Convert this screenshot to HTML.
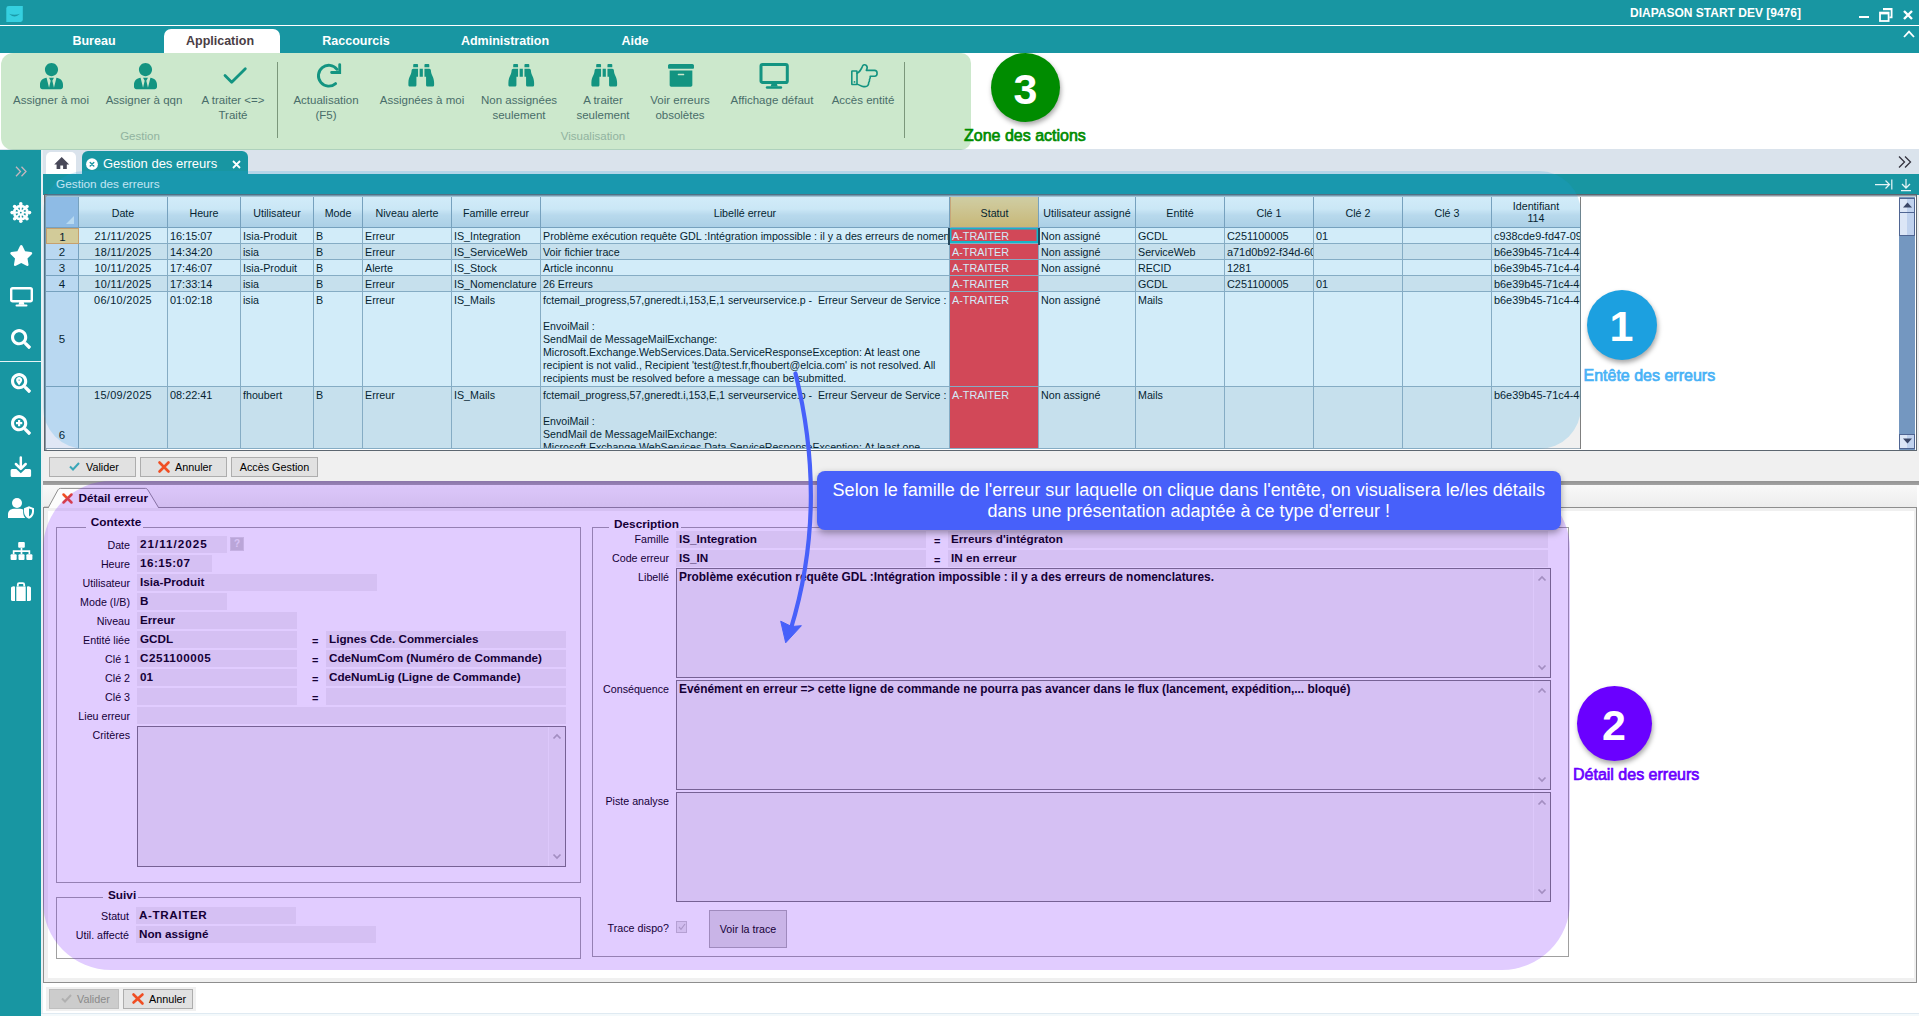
<!DOCTYPE html>
<html lang="fr">
<head>
<meta charset="utf-8">
<title>DIAPASON START DEV [9476]</title>
<style>
*{box-sizing:border-box}
html,body{margin:0;padding:0}
body{width:1919px;height:1016px;position:relative;overflow:hidden;background:#fff;font-family:"Liberation Sans",sans-serif;font-size:10.7px;color:#000}
.a{position:absolute}
.nw{white-space:nowrap}
svg{display:block;overflow:visible}
#titlebar{left:0;top:0;width:1919px;height:25px;background:#1896a2}
#titleline{left:0;top:25px;width:1919px;height:1.300px;background:#fff}
#menubar{left:0;top:26px;width:1919px;height:27px;background:#1896a2}
#ribbon{left:0;top:53px;width:1919px;height:97px;background:#fff}
#tabstrip{left:0;top:149px;width:1919px;height:25px;background:#dae3ec}
#sidebar{left:0;top:150px;width:41px;height:866px;background:#1896a2}
#sideline{left:41px;top:150px;width:2px;height:866px;background:#e9f1f4}
.menu{position:absolute;top:28px;height:26px;line-height:27px;color:#fff;font-weight:bold;font-size:12.5px;white-space:nowrap;text-align:center;width:120px}
.rib{position:absolute;top:93px;width:120px;text-align:center;font-size:11.5px;line-height:15px;color:#5c6685;white-space:nowrap}
.grp{position:absolute;top:129px;font-size:11.5px;line-height:15px;color:#b6bdc9;white-space:nowrap;text-align:center;width:120px}
.ic{position:absolute;fill:#1896a2}
.sic{position:absolute;fill:#fff}
/* grid */
.gh{position:absolute;top:197px;height:31px;background:linear-gradient(#ffffff,#f6f9fc 40%,#dfe8f0 60%,#cfdce8);border-right:1px solid #8da2b6;border-bottom:1px solid #8da2b6;text-align:center;line-height:31px;padding-top:1px;white-space:nowrap;overflow:hidden;font-size:10.7px}
.gc{position:absolute;white-space:nowrap;overflow:hidden;border-right:1px solid #9fb0bd;border-bottom:1px solid #9fb0bd;padding-left:2px;padding-top:1px;line-height:15px;font-size:10.7px}
.rh{position:absolute;left:46px;width:33px;background:#e6f0fa;border-right:1px solid #8da2b6;border-bottom:1px solid #8da2b6;text-align:center;font-size:11.5px}
.num{font-size:10.9px}
/* win buttons */
.btn{position:absolute;height:20px;background:#e1e1e1;border:1px solid #adadad;font-size:10.8px;line-height:18px;white-space:nowrap}
/* detail */
.lbl{position:absolute;text-align:right;white-space:nowrap;font-size:10.7px;line-height:18.5px;height:17px}
.fld{position:absolute;height:17px;background:#f0f0f0;font-weight:bold;font-size:11.7px;line-height:16.5px;padding-left:3px;white-space:nowrap;overflow:hidden}
.eq{position:absolute;font-weight:bold;font-size:11px;line-height:20.5px;height:17px}
.ta{position:absolute;background:#f0f0f0;border:1px solid #7a7a7a;font-weight:bold;font-size:11.9px;line-height:15px;padding:1px 0 0 2px;white-space:nowrap;overflow:hidden}
.tsb{position:absolute;top:0;right:0;width:17px;height:100%;background:#f0f0f0;border-left:1px solid #fafafa}
.gb{position:absolute;border:1px solid #a0a0a0;box-shadow:1px 1px 0 #fff, inset 1px 1px 0 #fff}
.gbl{position:absolute;font-weight:bold;font-size:11.8px;line-height:14px;background:#fff;padding:0 2px 0 5px;white-space:nowrap}
</style>
</head>
<body>
<div id="titlebar" class="a"></div>
<div id="titleline" class="a"></div>
<div id="menubar" class="a"></div>
<div id="ribbon" class="a"></div>
<div id="tabstrip" class="a"></div>
<div id="sidebar" class="a"></div>
<div id="sideline" class="a"></div>
<!-- ===== title bar ===== -->
<svg class="a" style="left:6px;top:6px" width="17" height="16" viewBox="6 6 17 16"><path d="M8.800 6H22.800V19.800Q22.800 21.900 20.600 21.900H6.300V8.400Q6.300 6 8.800 6Z" fill="#35d0e0"/><path d="M9 13.800Q14.500 15.800 20 13.800Q14.500 19.200 9 13.800Z" fill="#1a9aa8"/></svg>
<div class="a nw" style="left:1630px;top:5px;width:171px;height:17px;line-height:17px;color:#fff;font-weight:bold;font-size:12px;text-align:left">DIAPASON START DEV [9476]</div>
<div class="a" style="left:1859px;top:16px;width:10px;height:2px;background:#fff"></div>
<svg class="a" style="left:1879px;top:8px" width="14" height="14" viewBox="0 0 14 14"><path d="M4 0.8h8.6v8.6h-2.2" fill="none" stroke="#fff" stroke-width="1.8"/><rect x="1" y="4.6" width="8.6" height="8.4" fill="none" stroke="#fff" stroke-width="1.8"/><rect x="1" y="4.2" width="8.6" height="2.2" fill="#fff"/><rect x="4" y="0.2" width="8.6" height="2" fill="#fff"/></svg>
<svg class="a" style="left:1903px;top:10px" width="10" height="10" viewBox="0 0 10 10"><path d="M1 1L9 9M9 1L1 9" stroke="#fff" stroke-width="2.4" stroke-linecap="butt"/></svg>
<svg class="a" style="left:1903px;top:30px" width="12" height="8" viewBox="0 0 12 8"><path d="M1 7L6 1.6L11 7" fill="none" stroke="#fff" stroke-width="1.8"/></svg>
<!-- ===== menu ===== -->
<div class="a" style="left:164px;top:29px;width:116px;height:24px;background:#fff;border-radius:7px 7px 0 0"></div>
<div class="menu" style="left:34px">Bureau</div>
<div class="menu" style="left:160px;color:#4a3d45">Application</div>
<div class="menu" style="left:296px">Raccourcis</div>
<div class="menu" style="left:445px">Administration</div>
<div class="menu" style="left:575px">Aide</div>
<!-- ===== ribbon ===== -->
<div class="rib" style="left:-9px">Assigner à moi</div>
<div class="rib" style="left:84px">Assigner à qqn</div>
<div class="rib" style="left:173px">A traiter &lt;=&gt;<br>Traité</div>
<div class="rib" style="left:266px">Actualisation<br>(F5)</div>
<div class="rib" style="left:362px">Assignées à moi</div>
<div class="rib" style="left:459px">Non assignées<br>seulement</div>
<div class="rib" style="left:543px">A traiter<br>seulement</div>
<div class="rib" style="left:620px">Voir erreurs<br>obsolètes</div>
<div class="rib" style="left:712px">Affichage défaut</div>
<div class="rib" style="left:803px">Accès entité</div>
<div class="grp" style="left:80px">Gestion</div>
<div class="grp" style="left:533px">Visualisation</div>
<div class="a" style="left:277px;top:62px;width:1px;height:76px;background:#9a9a9a"></div>
<div class="a" style="left:904px;top:62px;width:1px;height:76px;background:#9a9a9a"></div>
<!-- ribbon icons -->
<svg class="ic" style="left:39.5px;top:62.5px" width="23" height="26.3" viewBox="0 0 448 512"><path d="M224 256c70.700 0 128-57.300 128-128S294.700 0 224 0 96 57.300 96 128s57.300 128 128 128zm95.800 32.600L272 480l-32-136 32-56h-96l32 56-32 136-47.800-191.400C56.900 292 0 350.300 0 422.400V464c0 26.500 21.500 48 48 48h352c26.500 0 48-21.500 48-48v-41.600c0-72.100-56.900-130.400-128.200-133.800z"/></svg>
<svg class="ic" style="left:133.500px;top:62.500px" width="23" height="26.300" viewBox="0 0 448 512"><path d="M224 256c70.700 0 128-57.300 128-128S294.700 0 224 0 96 57.300 96 128s57.300 128 128 128zm95.800 32.600L272 480l-32-136 32-56h-96l32 56-32 136-47.800-191.400C56.900 292 0 350.300 0 422.400V464c0 26.500 21.500 48 48 48h352c26.500 0 48-21.500 48-48v-41.600c0-72.100-56.900-130.400-128.200-133.800z"/></svg>
<svg class="a" style="left:222px;top:66px" width="26" height="20" viewBox="222 66 26 20"><path d="M225 75.600L231.700 82.300L245.300 68.700" fill="none" stroke="#1896a2" stroke-width="2.800" stroke-linecap="round" stroke-linejoin="round"/></svg>
<svg class="a" style="left:316px;top:63px" width="26" height="25" viewBox="0 0 26 25"><path d="M21 6.300A10.400 10.400 0 1 0 19.600 20.600" fill="none" stroke="#1896a2" stroke-width="2.900" stroke-linecap="round"/><path d="M23.700 1.600V9.500H15.600" fill="none" stroke="#1896a2" stroke-width="2.800" stroke-linecap="round" stroke-linejoin="miter"/></svg>
<svg class="ic" style="left:408px;top:64px" width="26.500" height="22.500" viewBox="0 32 512 448"><path d="M416 48c0-8.840-7.160-16-16-16h-64c-8.840 0-16 7.160-16 16v48h96V48zM63.910 159.990C61.400 253.840 3.460 274.220 0 404v44c0 17.670 14.330 32 32 32h96c17.670 0 32-14.330 32-32V288h32V128H95.840c-17.630 0-31.450 14.370-31.930 31.990zm384.180 0c-.480-17.620-14.300-31.990-31.930-31.990H320v160h32v160c0 17.670 14.330 32 32 32h96c17.670 0 32-14.330 32-32v-44c-3.460-129.780-61.400-150.160-63.910-244.010zM176 32h-64c-8.840 0-16 7.160-16 16v48h96V48c0-8.840-7.160-16-16-16zm48 256h64V128h-64v160z"/></svg>
<svg class="ic" style="left:507.500px;top:64px" width="26.500" height="22.500" viewBox="0 32 512 448"><path d="M416 48c0-8.840-7.160-16-16-16h-64c-8.840 0-16 7.160-16 16v48h96V48zM63.910 159.990C61.400 253.840 3.460 274.220 0 404v44c0 17.670 14.330 32 32 32h96c17.670 0 32-14.330 32-32V288h32V128H95.840c-17.630 0-31.450 14.370-31.930 31.990zm384.180 0c-.480-17.620-14.300-31.990-31.930-31.990H320v160h32v160c0 17.670 14.330 32 32 32h96c17.670 0 32-14.330 32-32v-44c-3.460-129.780-61.400-150.160-63.910-244.010zM176 32h-64c-8.840 0-16 7.160-16 16v48h96V48c0-8.840-7.160-16-16-16zm48 256h64V128h-64v160z"/></svg>
<svg class="ic" style="left:591px;top:64px" width="26.500" height="22.500" viewBox="0 32 512 448"><path d="M416 48c0-8.840-7.160-16-16-16h-64c-8.840 0-16 7.160-16 16v48h96V48zM63.910 159.990C61.400 253.840 3.460 274.220 0 404v44c0 17.670 14.330 32 32 32h96c17.670 0 32-14.330 32-32V288h32V128H95.840c-17.630 0-31.450 14.370-31.930 31.990zm384.180 0c-.480-17.620-14.300-31.990-31.930-31.990H320v160h32v160c0 17.670 14.330 32 32 32h96c17.670 0 32-14.330 32-32v-44c-3.460-129.780-61.400-150.160-63.910-244.010zM176 32h-64c-8.840 0-16 7.160-16 16v48h96V48c0-8.840-7.160-16-16-16zm48 256h64V128h-64v160z"/></svg>
<svg class="ic" style="left:668px;top:64px" width="26" height="22.700" viewBox="0 32 512 448"><path d="M32 448c0 17.700 14.300 32 32 32h384c17.700 0 32-14.300 32-32V160H32v288zm160-212c0-6.600 5.400-12 12-12h104c6.600 0 12 5.400 12 12v8c0 6.600-5.400 12-12 12H204c-6.600 0-12-5.400-12-12v-8zM480 32H32C14.300 32 0 46.300 0 64v48c0 8.800 7.200 16 16 16h480c8.800 0 16-7.200 16-16V64c0-17.700-14.300-32-32-32z"/></svg>
<svg class="a" style="left:759px;top:63px" width="30" height="26" viewBox="0 0 30 26"><rect x="2" y="1.500" width="26.300" height="18" rx="1.600" fill="none" stroke="#1896a2" stroke-width="3"/><path d="M12.600 20.500h5.200l0.900 3h-7z" fill="#1896a2"/><rect x="6.800" y="23.200" width="16.400" height="2.600" rx="1.300" fill="#1896a2"/></svg>
<svg class="a" style="left:851px;top:64px" width="27" height="24" viewBox="0 0 27 24"><g fill="none" stroke="#1896a2" stroke-width="1.600" stroke-linejoin="round" stroke-linecap="round"><rect x="0.800" y="7" width="5.200" height="13.500" rx="0.600"/><path d="M6 9.200C8.500 8 10.200 5.500 11.300 2.600C12 0.600 14 0.200 15.300 1.400C16.700 2.700 16.300 4.600 15.300 6.400H23.600C25.200 6.400 26.100 7.800 26.100 9.300C26.100 10.900 25.200 12.300 23.600 12.300H19.200C19.400 13.500 19.200 14.600 18.500 15.500C18.700 16.600 18.400 17.700 17.700 18.500C17.800 20.800 16.500 22.600 14 22.600H12.500C10 22.600 8.500 20.600 6 20.200"/></g><circle cx="3.500" cy="17.900" r="0.900" fill="#1896a2"/></svg>
<!-- ===== document tabs ===== -->
<div class="a" style="left:46px;top:152px;width:30px;height:22px;background:#fff;border-radius:5px 5px 0 0"></div>
<svg class="a" style="left:54px;top:156px" width="16" height="14" viewBox="54 156 16 14"><path d="M61.700 157L69.200 164.400H66.800V169H63.100V165.600H60.300V169H56.600V164.400H54.200Z" fill="#484858"/></svg>
<div class="a" style="left:82px;top:151px;width:166px;height:24px;background:#1896a2;border-radius:6px 6px 0 0"></div>
<svg class="a" style="left:86px;top:158px" width="13" height="13" viewBox="86 158 13 13"><circle cx="92" cy="164.200" r="5.900" fill="#fff"/><path d="M90.200 162.400L93.800 166M93.800 162.400L90.200 166" stroke="#1896a2" stroke-width="1.400" stroke-linecap="round"/></svg>
<div class="a nw" style="left:103px;top:155px;height:18px;line-height:18px;font-size:13px;color:#fff">Gestion des erreurs</div>
<svg class="a" style="left:231.500px;top:159.500px" width="9" height="9" viewBox="0 0 9 9"><path d="M1 1L8 8M8 1L1 8" stroke="#fff" stroke-width="1.800"/></svg>
<svg class="a" style="left:1898px;top:156px" width="14" height="12" viewBox="0 0 14 12"><path d="M1 0.500L6.500 6L1 11.500M7 0.500L12.500 6L7 11.500" fill="none" stroke="#33323e" stroke-width="1.300"/></svg>
<!-- panel header -->
<div class="a" style="left:43px;top:174px;width:1876px;height:21px;background:#1896a2"></div>
<div class="a nw" style="left:56px;top:175px;height:18px;line-height:18px;font-size:11.800px;color:#e8f6f8">Gestion des erreurs</div>
<svg class="a" style="left:1874px;top:178px" width="20" height="13" viewBox="0 0 20 13"><path d="M1 6.500h14M11.500 2.500L15.500 6.500L11.500 10.500M17.800 1.500v10" fill="none" stroke="#e6f4f6" stroke-width="1.250"/></svg>
<svg class="a" style="left:1900px;top:178px" width="12" height="14" viewBox="0 0 12 14"><path d="M6 1v9M2 6L6 10L10 6M1 12.700h10" fill="none" stroke="#e6f4f6" stroke-width="1.250"/></svg>
<!-- ===== sidebar icons ===== -->
<svg class="a" style="left:15px;top:166px" width="12" height="11" viewBox="0 0 12 11"><path d="M1 0.800L5.500 5.500L1 10.200M6.500 0.800L11 5.500L6.500 10.200" fill="none" stroke="#c6b6be" stroke-width="1.300"/></svg>
<svg class="a" style="left:9px;top:201px" width="24" height="24" viewBox="9 201 24 24"><circle cx="20.8" cy="212.6" r="7.900" fill="#fff"/><circle cx="29.50" cy="212.60" r="1.800" fill="#fff"/><circle cx="26.95" cy="218.75" r="1.800" fill="#fff"/><circle cx="20.80" cy="221.30" r="1.800" fill="#fff"/><circle cx="14.65" cy="218.75" r="1.800" fill="#fff"/><circle cx="12.10" cy="212.60" r="1.800" fill="#fff"/><circle cx="14.65" cy="206.45" r="1.800" fill="#fff"/><circle cx="20.80" cy="203.90" r="1.800" fill="#fff"/><circle cx="26.95" cy="206.45" r="1.800" fill="#fff"/><path d="M24.02 213.34L25.96 213.79A5.3 5.3 0 0 1 25.29 215.41L23.60 214.35ZM22.55 215.40L23.61 217.09A5.3 5.3 0 0 1 21.99 217.76L21.54 215.82ZM20.06 215.82L19.61 217.76A5.3 5.3 0 0 1 17.99 217.09L19.05 215.40ZM18.00 214.35L16.31 215.41A5.3 5.3 0 0 1 15.64 213.79L17.58 213.34ZM17.58 211.86L15.64 211.41A5.3 5.3 0 0 1 16.31 209.79L18.00 210.85ZM19.05 209.80L17.99 208.11A5.3 5.3 0 0 1 19.61 207.44L20.06 209.38ZM21.54 209.38L21.99 207.44A5.3 5.3 0 0 1 23.61 208.11L22.55 209.80ZM23.60 210.85L25.29 209.79A5.3 5.3 0 0 1 25.96 211.41L24.02 211.86Z" fill="#1896a2"/><circle cx="20.8" cy="212.6" r="0.900" fill="#1896a2"/></svg>
<svg class="sic" style="left:9.500px;top:244.500px" width="22.500" height="21" viewBox="20 0 536 512"><path d="M259.300 17.800L194 150.200 47.900 171.500c-26.200 3.800-36.700 36.100-17.700 54.600l105.700 103-25 145.500c-4.500 26.300 23.200 46 46.400 33.700L288 439.600l130.700 68.700c23.200 12.200 50.900-7.400 46.400-33.700l-25-145.500 105.700-103c19-18.500 8.500-50.800-17.700-54.600L382 150.200 316.700 17.800c-11.700-23.600-45.600-23.900-57.400 0z"/></svg>
<svg class="a" style="left:9.500px;top:287px" width="23" height="20" viewBox="0 0 23 20"><rect x="1.200" y="1.200" width="20.600" height="13" rx="1.500" fill="none" stroke="#fff" stroke-width="2.400"/><path d="M9.300 15h4.400l0.800 2.800h-6z" fill="#fff"/><rect x="5.500" y="17.500" width="12" height="2" rx="1" fill="#fff"/></svg>
<svg class="sic" style="left:10.500px;top:329px" width="20" height="20" viewBox="0 0 512 512"><path d="M505 442.700L405.300 343c-4.500-4.500-10.600-7-17-7H372c27.600-35.300 44-79.700 44-128C416 93.100 322.900 0 208 0S0 93.100 0 208s93.100 208 208 208c48.300 0 92.700-16.400 128-44v16.300c0 6.400 2.500 12.500 7 17l99.700 99.700c9.400 9.400 24.600 9.400 33.900 0l28.300-28.300c9.400-9.400 9.400-24.600.1-34zM208 336c-70.700 0-128-57.200-128-128 0-70.700 57.200-128 128-128 70.700 0 128 57.200 128 128 0 70.700-57.200 128-128 128z"/></svg>
<div class="a" style="left:0;top:361px;width:41px;height:1px;background:#e6f3f5"></div>
<svg class="sic" style="left:10.500px;top:373px" width="20" height="20" viewBox="0 0 512 512"><path d="M505 442.700L405.300 343c-4.500-4.500-10.600-7-17-7H372c27.600-35.300 44-79.700 44-128C416 93.100 322.900 0 208 0S0 93.100 0 208s93.100 208 208 208c48.300 0 92.700-16.400 128-44v16.300c0 6.400 2.500 12.500 7 17l99.700 99.700c9.400 9.400 24.600 9.400 33.900 0l28.300-28.300c9.400-9.400 9.400-24.600.1-34zM208 336c-70.700 0-128-57.200-128-128 0-70.700 57.200-128 128-128 70.700 0 128 57.200 128 128 0 70.700-57.200 128-128 128z"/><path d="M208 104c-44 0-78 34-78 78 0 50 78 132 78 132s78-82 78-132c0-44-34-78-78-78zm0 96a18 18 0 1 1 0-36 18 18 0 0 1 0 36z"/></svg>
<svg class="sic" style="left:10.500px;top:415px" width="20" height="20" viewBox="0 0 512 512"><path d="M505 442.700L405.300 343c-4.500-4.500-10.600-7-17-7H372c27.600-35.300 44-79.700 44-128C416 93.100 322.900 0 208 0S0 93.100 0 208s93.100 208 208 208c48.300 0 92.700-16.400 128-44v16.300c0 6.400 2.500 12.500 7 17l99.700 99.700c9.400 9.400 24.600 9.400 33.900 0l28.300-28.300c9.400-9.400 9.400-24.600.1-34zM208 336c-70.700 0-128-57.200-128-128 0-70.700 57.200-128 128-128 70.700 0 128 57.200 128 128 0 70.700-57.200 128-128 128z"/><path d="M180 128h56v52h52v56h-52v52h-56v-52h-52v-56h52z"/></svg>
<svg class="a" style="left:10px;top:456px" width="22" height="22" viewBox="10 456 22 22"><path d="M12.100 469H16.300L20.800 473.300L25.300 469H29.600Q31.100 469 31.100 470.500V475.500Q31.100 477 29.600 477H12.100Q10.600 477 10.600 475.500V470.500Q10.600 469 12.100 469Z" fill="#fff"/><path d="M20.800 457.600V468M15.900 464L20.800 468.900L25.700 464" fill="none" stroke="#fff" stroke-width="2.500" stroke-linecap="round" stroke-linejoin="round"/></svg>
<svg class="a" style="left:7.500px;top:498px" width="26" height="21" viewBox="0 0 26 21"><circle cx="9" cy="5" r="5" fill="#fff"/><path d="M0 20v-3.500c0-3.600 2.800-5.700 6-5.700h6c1.300 0 2.300 0.300 3.200 0.800v3c0 2.300 0.800 4 2 5.400z" fill="#fff"/><path d="M21 8.200l5 2v3.200c0 3.300-2.200 6.200-5 7.300c-2.800-1.100-5-4-5-7.300v-3.200z" fill="#fff"/><path d="M21 10.400v8c1.700-1 3-2.800 3-5v-1.900z" fill="#1896a2"/></svg>
<svg class="a" style="left:9.500px;top:541.500px" width="23" height="18" viewBox="0 0 23 19"><g fill="#fff"><rect x="8" y="0" width="7" height="6" rx="1"/><rect x="0" y="13" width="6.400" height="6" rx="1"/><rect x="8.300" y="13" width="6.400" height="6" rx="1"/><rect x="16.600" y="13" width="6.400" height="6" rx="1"/></g><path d="M11.500 6v7M3.200 13v-3.400h16.600v3.400" fill="none" stroke="#fff" stroke-width="1.800"/></svg>
<svg class="a" style="left:10.500px;top:582px" width="20" height="20" viewBox="0 0 20 20"><path d="M6.800 4.500v-2c0-0.800 0.600-1.300 1.300-1.300h3.800c0.700 0 1.300 0.500 1.300 1.300v2" fill="none" stroke="#fff" stroke-width="1.800"/><rect x="0" y="4.500" width="4" height="14.500" rx="1.600" fill="#fff"/><rect x="16" y="4.500" width="4" height="14.500" rx="1.600" fill="#fff"/><rect x="2" y="4.500" width="2" height="14.500" fill="#fff"/><rect x="16" y="4.500" width="2" height="14.500" fill="#fff"/><rect x="5.300" y="4.500" width="9.400" height="14.500" fill="#fff"/></svg>
<!-- ===== grid ===== -->
<div class="a" style="left:43px;top:195px;width:1876px;height:287px;background:#f0f0f0"></div>
<div class="a" style="left:43.500px;top:194.200px;width:1873.500px;height:256.800px;background:#fff;border:1px solid #5c6670;box-shadow:inset 1.600px 1.600px 0 #8c98a2"></div>
<div class="gh" style="left:46px;width:33px;background:#abc2e7"></div>
<svg class="a" style="left:66px;top:216px" width="8" height="8" viewBox="0 0 8 8"><path d="M8 0v8h-8z" fill="#dfe9f6"/></svg>
<div class="gh" style="left:79px;width:89px">Date</div>
<div class="gh" style="left:168px;width:73px">Heure</div>
<div class="gh" style="left:241px;width:73px">Utilisateur</div>
<div class="gh" style="left:314px;width:49px">Mode</div>
<div class="gh" style="left:363px;width:89px">Niveau alerte</div>
<div class="gh" style="left:452px;width:89px">Famille erreur</div>
<div class="gh" style="left:541px;width:409px">Libellé erreur</div>
<div class="gh" style="left:950px;width:89px;background:linear-gradient(#fcd994,#f8cc7a 50%,#f3be5e);border-left:1px solid #f0a860">Statut</div>
<div class="gh" style="left:1039px;width:97px">Utilisateur assigné</div>
<div class="gh" style="left:1136px;width:89px">Entité</div>
<div class="gh" style="left:1225px;width:89px">Clé 1</div>
<div class="gh" style="left:1314px;width:89px">Clé 2</div>
<div class="gh" style="left:1403px;width:89px">Clé 3</div>
<div class="gh" style="left:1492px;width:89px;line-height:12px;padding-top:3px">Identifiant<br>114</div>
<div class="rh" style="top:228px;height:16px;background:#ffd688;line-height:16px;padding-top:0px;border:1px solid #f0a050">1</div>
<div class="gc num" style="left:79px;top:228px;width:89px;height:16px;background:#ffffff;text-align:center;padding-left:0;letter-spacing:0.350px">21/11/2025</div>
<div class="gc num" style="left:168px;top:228px;width:73px;height:16px;background:#ffffff">16:15:07</div>
<div class="gc" style="left:241px;top:228px;width:73px;height:16px;background:#ffffff">Isia-Produit</div>
<div class="gc" style="left:314px;top:228px;width:49px;height:16px;background:#ffffff">B</div>
<div class="gc" style="left:363px;top:228px;width:89px;height:16px;background:#ffffff">Erreur</div>
<div class="gc" style="left:452px;top:228px;width:89px;height:16px;background:#ffffff">IS_Integration</div>
<div class="gc" style="left:541px;top:228px;width:409px;height:16px;background:#ffffff">Problème exécution requête GDL :Intégration impossible : il y a des erreurs de nomenclatures.</div>
<div class="gc" style="left:950px;top:228px;width:89px;height:16px;background:#ffffff;background:#ff3236;color:#fff;font-size:10.800px;box-shadow:inset 0 0 0 1.500px #14bcc4, inset 0 -2px 0 0 #14bcc4">A-TRAITER</div>
<div class="gc" style="left:1039px;top:228px;width:97px;height:16px;background:#ffffff">Non assigné</div>
<div class="gc" style="left:1136px;top:228px;width:89px;height:16px;background:#ffffff">GCDL</div>
<div class="gc num" style="left:1225px;top:228px;width:89px;height:16px;background:#ffffff">C251100005</div>
<div class="gc num" style="left:1314px;top:228px;width:89px;height:16px;background:#ffffff">01</div>
<div class="gc" style="left:1403px;top:228px;width:89px;height:16px;background:#ffffff"></div>
<div class="gc num" style="left:1492px;top:228px;width:89px;height:16px;background:#ffffff">c938cde9-fd47-09a4</div>
<div class="rh" style="top:244px;height:16px;background:#e0e7f5;line-height:16px;padding-top:0px">2</div>
<div class="gc num" style="left:79px;top:244px;width:89px;height:16px;background:#f0f0f0;text-align:center;padding-left:0;letter-spacing:0.350px">18/11/2025</div>
<div class="gc num" style="left:168px;top:244px;width:73px;height:16px;background:#f0f0f0">14:34:20</div>
<div class="gc" style="left:241px;top:244px;width:73px;height:16px;background:#f0f0f0">isia</div>
<div class="gc" style="left:314px;top:244px;width:49px;height:16px;background:#f0f0f0">B</div>
<div class="gc" style="left:363px;top:244px;width:89px;height:16px;background:#f0f0f0">Erreur</div>
<div class="gc" style="left:452px;top:244px;width:89px;height:16px;background:#f0f0f0">IS_ServiceWeb</div>
<div class="gc" style="left:541px;top:244px;width:409px;height:16px;background:#f0f0f0">Voir fichier trace</div>
<div class="gc" style="left:950px;top:244px;width:89px;height:16px;background:#f0f0f0;background:#ff3236;color:#fff;font-size:10.800px">A-TRAITER</div>
<div class="gc" style="left:1039px;top:244px;width:97px;height:16px;background:#f0f0f0">Non assigné</div>
<div class="gc" style="left:1136px;top:244px;width:89px;height:16px;background:#f0f0f0">ServiceWeb</div>
<div class="gc num" style="left:1225px;top:244px;width:89px;height:16px;background:#f0f0f0">a71d0b92-f34d-6000</div>
<div class="gc num" style="left:1314px;top:244px;width:89px;height:16px;background:#f0f0f0"></div>
<div class="gc" style="left:1403px;top:244px;width:89px;height:16px;background:#f0f0f0"></div>
<div class="gc num" style="left:1492px;top:244px;width:89px;height:16px;background:#f0f0f0">b6e39b45-71c4-4d11</div>
<div class="rh" style="top:260px;height:16px;background:#e0e7f5;line-height:16px;padding-top:0px">3</div>
<div class="gc num" style="left:79px;top:260px;width:89px;height:16px;background:#ffffff;text-align:center;padding-left:0;letter-spacing:0.350px">10/11/2025</div>
<div class="gc num" style="left:168px;top:260px;width:73px;height:16px;background:#ffffff">17:46:07</div>
<div class="gc" style="left:241px;top:260px;width:73px;height:16px;background:#ffffff">Isia-Produit</div>
<div class="gc" style="left:314px;top:260px;width:49px;height:16px;background:#ffffff">B</div>
<div class="gc" style="left:363px;top:260px;width:89px;height:16px;background:#ffffff">Alerte</div>
<div class="gc" style="left:452px;top:260px;width:89px;height:16px;background:#ffffff">IS_Stock</div>
<div class="gc" style="left:541px;top:260px;width:409px;height:16px;background:#ffffff">Article inconnu</div>
<div class="gc" style="left:950px;top:260px;width:89px;height:16px;background:#ffffff;background:#ff3236;color:#fff;font-size:10.800px">A-TRAITER</div>
<div class="gc" style="left:1039px;top:260px;width:97px;height:16px;background:#ffffff">Non assigné</div>
<div class="gc" style="left:1136px;top:260px;width:89px;height:16px;background:#ffffff">RECID</div>
<div class="gc num" style="left:1225px;top:260px;width:89px;height:16px;background:#ffffff">1281</div>
<div class="gc num" style="left:1314px;top:260px;width:89px;height:16px;background:#ffffff"></div>
<div class="gc" style="left:1403px;top:260px;width:89px;height:16px;background:#ffffff"></div>
<div class="gc num" style="left:1492px;top:260px;width:89px;height:16px;background:#ffffff">b6e39b45-71c4-4d11</div>
<div class="rh" style="top:276px;height:16px;background:#e0e7f5;line-height:16px;padding-top:0px">4</div>
<div class="gc num" style="left:79px;top:276px;width:89px;height:16px;background:#f0f0f0;text-align:center;padding-left:0;letter-spacing:0.350px">10/11/2025</div>
<div class="gc num" style="left:168px;top:276px;width:73px;height:16px;background:#f0f0f0">17:33:14</div>
<div class="gc" style="left:241px;top:276px;width:73px;height:16px;background:#f0f0f0">isia</div>
<div class="gc" style="left:314px;top:276px;width:49px;height:16px;background:#f0f0f0">B</div>
<div class="gc" style="left:363px;top:276px;width:89px;height:16px;background:#f0f0f0">Erreur</div>
<div class="gc" style="left:452px;top:276px;width:89px;height:16px;background:#f0f0f0">IS_Nomenclature</div>
<div class="gc" style="left:541px;top:276px;width:409px;height:16px;background:#f0f0f0">26 Erreurs</div>
<div class="gc" style="left:950px;top:276px;width:89px;height:16px;background:#f0f0f0;background:#ff3236;color:#fff;font-size:10.800px">A-TRAITER</div>
<div class="gc" style="left:1039px;top:276px;width:97px;height:16px;background:#f0f0f0"></div>
<div class="gc" style="left:1136px;top:276px;width:89px;height:16px;background:#f0f0f0">GCDL</div>
<div class="gc num" style="left:1225px;top:276px;width:89px;height:16px;background:#f0f0f0">C251100005</div>
<div class="gc num" style="left:1314px;top:276px;width:89px;height:16px;background:#f0f0f0">01</div>
<div class="gc" style="left:1403px;top:276px;width:89px;height:16px;background:#f0f0f0"></div>
<div class="gc num" style="left:1492px;top:276px;width:89px;height:16px;background:#f0f0f0">b6e39b45-71c4-4d11</div>
<div class="rh" style="top:292px;height:95px;background:#e0e7f5;line-height:95px">5</div>
<div class="gc num" style="left:79px;top:292px;width:89px;height:95px;background:#ffffff;text-align:center;padding-left:0;letter-spacing:0.350px">06/10/2025</div>
<div class="gc num" style="left:168px;top:292px;width:73px;height:95px;background:#ffffff">01:02:18</div>
<div class="gc" style="left:241px;top:292px;width:73px;height:95px;background:#ffffff">isia</div>
<div class="gc" style="left:314px;top:292px;width:49px;height:95px;background:#ffffff">B</div>
<div class="gc" style="left:363px;top:292px;width:89px;height:95px;background:#ffffff">Erreur</div>
<div class="gc" style="left:452px;top:292px;width:89px;height:95px;background:#ffffff">IS_Mails</div>
<div class="gc" style="left:541px;top:292px;width:409px;height:95px;background:#ffffff;line-height:13px;padding-top:2px;font-size:10.600px">fctemail_progress,57,gneredt.i,153,E,1 serveurservice.p -&nbsp; Erreur Serveur de Service :<br>&nbsp;<br>EnvoiMail :<br>SendMail de MessageMailExchange:<br>Microsoft.Exchange.WebServices.Data.ServiceResponseException: At least one<br>recipient is not valid., Recipient 'test@test.fr,fhoubert@elcia.com' is not resolved. All<br>recipients must be resolved before a message can be submitted.</div>
<div class="gc" style="left:950px;top:292px;width:89px;height:95px;background:#ffffff;background:#ff3236;color:#fff;font-size:10.800px">A-TRAITER</div>
<div class="gc" style="left:1039px;top:292px;width:97px;height:95px;background:#ffffff">Non assigné</div>
<div class="gc" style="left:1136px;top:292px;width:89px;height:95px;background:#ffffff">Mails</div>
<div class="gc num" style="left:1225px;top:292px;width:89px;height:95px;background:#ffffff"></div>
<div class="gc num" style="left:1314px;top:292px;width:89px;height:95px;background:#ffffff"></div>
<div class="gc" style="left:1403px;top:292px;width:89px;height:95px;background:#ffffff"></div>
<div class="gc num" style="left:1492px;top:292px;width:89px;height:95px;background:#ffffff">b6e39b45-71c4-4d11</div>
<div class="rh" style="top:387px;height:62px;background:#e0e7f5;line-height:96px">6</div>
<div class="gc num" style="left:79px;top:387px;width:89px;height:62px;background:#f0f0f0;text-align:center;padding-left:0;letter-spacing:0.350px">15/09/2025</div>
<div class="gc num" style="left:168px;top:387px;width:73px;height:62px;background:#f0f0f0">08:22:41</div>
<div class="gc" style="left:241px;top:387px;width:73px;height:62px;background:#f0f0f0">fhoubert</div>
<div class="gc" style="left:314px;top:387px;width:49px;height:62px;background:#f0f0f0">B</div>
<div class="gc" style="left:363px;top:387px;width:89px;height:62px;background:#f0f0f0">Erreur</div>
<div class="gc" style="left:452px;top:387px;width:89px;height:62px;background:#f0f0f0">IS_Mails</div>
<div class="gc" style="left:541px;top:387px;width:409px;height:62px;background:#f0f0f0;line-height:13px;padding-top:2px;font-size:10.600px">fctemail_progress,57,gneredt.i,153,E,1 serveurservice.p -&nbsp; Erreur Serveur de Service :<br>&nbsp;<br>EnvoiMail :<br>SendMail de MessageMailExchange:<br>Microsoft.Exchange.WebServices.Data.ServiceResponseException: At least one</div>
<div class="gc" style="left:950px;top:387px;width:89px;height:62px;background:#f0f0f0;background:#ff3236;color:#fff;font-size:10.800px">A-TRAITER</div>
<div class="gc" style="left:1039px;top:387px;width:97px;height:62px;background:#f0f0f0">Non assigné</div>
<div class="gc" style="left:1136px;top:387px;width:89px;height:62px;background:#f0f0f0">Mails</div>
<div class="gc num" style="left:1225px;top:387px;width:89px;height:62px;background:#f0f0f0"></div>
<div class="gc num" style="left:1314px;top:387px;width:89px;height:62px;background:#f0f0f0"></div>
<div class="gc" style="left:1403px;top:387px;width:89px;height:62px;background:#f0f0f0"></div>
<div class="gc num" style="left:1492px;top:387px;width:89px;height:62px;background:#f0f0f0">b6e39b45-71c4-4d11</div>
<div class="a" style="left:948px;top:228px;width:2px;height:17px;background:#26323c"></div>
<div class="a" style="left:1037.500px;top:228px;width:2px;height:17px;background:#26323c"></div>
<div class="a" style="left:1580px;top:197px;width:1px;height:252px;background:#7f7f7f"></div>
<div class="a" style="left:1899px;top:197px;width:16px;height:252.500px;background:#7497c0"></div>
<div class="a" style="left:1899px;top:197.500px;width:16px;height:15px;background:linear-gradient(90deg,#dce6f6 0,#dce6f6 48%,#c0d2ee 52%,#c0d2ee);border:1px solid #4f6592"></div>
<svg class="a" style="left:1902.500px;top:201.500px" width="9" height="6" viewBox="0 0 9 6"><path d="M0 5.500L4.500 0.500L9 5.500z" fill="#3a4666"/></svg>
<div class="a" style="left:1899px;top:212px;width:16px;height:23.500px;background:linear-gradient(90deg,#dce6f6 0,#dce6f6 48%,#c0d2ee 52%,#c0d2ee);border:1px solid #4f6592"></div>
<div class="a" style="left:1899px;top:433.500px;width:16px;height:15.500px;background:linear-gradient(90deg,#dce6f6 0,#dce6f6 48%,#c0d2ee 52%,#c0d2ee);border:1px solid #4f6592"></div>
<svg class="a" style="left:1902.500px;top:438px" width="9" height="6" viewBox="0 0 9 6"><path d="M0 0.500L4.500 5.500L9 0.500z" fill="#3a4666"/></svg>
<!-- ===== mid button bar ===== -->
<div class="btn" style="left:49px;top:457px;width:87px"></div>
<svg class="a" style="left:69px;top:462px" width="11" height="9" viewBox="0 0 11 9"><path d="M1 4.500L4 7.500L10 1" fill="none" stroke="#3aa6b8" stroke-width="2"/></svg>
<div class="a nw" style="left:86px;top:458px;font-size:10.800px;line-height:19px">Valider</div>
<div class="btn" style="left:140px;top:457px;width:87px"></div>
<svg class="a" style="left:158px;top:461px" width="12" height="12" viewBox="0 0 12 12"><path d="M1.500 1.500L10.500 10.500M10.500 1.500L1.500 10.500" stroke="#f04e23" stroke-width="2.600" stroke-linecap="round"/></svg>
<div class="a nw" style="left:175px;top:458px;font-size:10.800px;line-height:19px">Annuler</div>
<div class="btn" style="left:231px;top:457px;width:87px;text-align:center">Accès Gestion</div>
<!-- splitter -->
<div class="a" style="left:43px;top:481.200px;width:1876px;height:3.400px;background:linear-gradient(#939393,#a3a3a3)"></div>
<!-- tab header zone -->
<div class="a" style="left:43px;top:484.600px;width:1876px;height:23.400px;background:linear-gradient(#f9f9f9,#ececec)"></div>
<!-- tab page -->
<div class="a" style="left:43px;top:507px;width:1874px;height:476px;background:#f0f0f0;border:1px solid #8e8e8e"></div>
<div class="a" style="left:48px;top:511px;width:1866px;height:467px;background:#fff"></div>
<div class="a" style="left:1917px;top:486px;width:2px;height:530px;background:#fff"></div>
<svg class="a" style="left:43px;top:486px" width="120" height="24" viewBox="43 486 120 24"><path d="M48.500 508L58 489.800Q58.800 488.400 60.500 488.400H145.500Q147 488.400 147.800 489.800L158.300 508Z" fill="#fcfcfc"/><path d="M44 507.200H48.500L58 489.800Q58.800 488.400 60.500 488.400H145.500Q147 488.400 147.800 489.800L158.300 507.200" fill="none" stroke="#8e8e8e" stroke-width="1"/></svg>
<svg class="a" style="left:61.500px;top:492.500px" width="11" height="11" viewBox="0 0 11 11"><path d="M1.500 1.500L9.500 9.500M9.500 1.500L1.500 9.500" stroke="#f04e23" stroke-width="2.500" stroke-linecap="round"/></svg>
<div class="a nw" style="left:78.500px;top:489px;font-weight:bold;font-size:11.800px;line-height:18px">Détail erreur</div>
<!-- Contexte group -->
<div class="gb" style="left:56px;top:527px;width:525px;height:356px"></div>
<div class="gbl" style="left:85.800px;top:515px">Contexte</div>
<div class="lbl" style="left:50px;width:80px;top:536px">Date</div>
<div class="fld" style="left:137px;top:536px;width:90px;letter-spacing:1px">21/11/2025</div>
<div class="a" style="left:230px;top:537px;width:14px;height:14px;background:#cfcfcf;border:1px solid #dcdcdc;color:#f4f4f4;font-size:10px;font-weight:bold;line-height:12px;text-align:center">?</div>
<div class="lbl" style="left:50px;width:80px;top:555px">Heure</div>
<div class="fld" style="left:137px;top:555px;width:75px;letter-spacing:0.450px">16:15:07</div>
<div class="lbl" style="left:50px;width:80px;top:574px">Utilisateur</div>
<div class="fld" style="left:137px;top:574px;width:240px">Isia-Produit</div>
<div class="lbl" style="left:50px;width:80px;top:593px">Mode (I/B)</div>
<div class="fld" style="left:137px;top:593px;width:90px">B</div>
<div class="lbl" style="left:50px;width:80px;top:612px">Niveau</div>
<div class="fld" style="left:137px;top:612px;width:160px">Erreur</div>
<div class="lbl" style="left:50px;width:80px;top:631px">Entité liée</div>
<div class="fld" style="left:137px;top:631px;width:160px">GCDL</div>
<div class="eq" style="left:312px;top:631px">=</div>
<div class="fld" style="left:326px;top:631px;width:240px">Lignes Cde. Commerciales</div>
<div class="lbl" style="left:50px;width:80px;top:650px">Clé 1</div>
<div class="fld" style="left:137px;top:650px;width:160px;letter-spacing:0.500px">C251100005</div>
<div class="eq" style="left:312px;top:650px">=</div>
<div class="fld" style="left:326px;top:650px;width:240px">CdeNumCom (Numéro de Commande)</div>
<div class="lbl" style="left:50px;width:80px;top:669px">Clé 2</div>
<div class="fld" style="left:137px;top:669px;width:160px">01</div>
<div class="eq" style="left:312px;top:669px">=</div>
<div class="fld" style="left:326px;top:669px;width:240px">CdeNumLig (Ligne de Commande)</div>
<div class="lbl" style="left:50px;width:80px;top:688px">Clé 3</div>
<div class="fld" style="left:137px;top:688px;width:160px"></div>
<div class="eq" style="left:312px;top:688px">=</div>
<div class="fld" style="left:326px;top:688px;width:240px"></div>
<div class="lbl" style="left:50px;width:80px;top:707px">Lieu erreur</div>
<div class="fld" style="left:137px;top:707px;width:429px"></div>
<div class="lbl" style="left:50px;width:80px;top:726px">Critères</div>
<div class="ta" style="left:137px;top:726px;width:429px;height:141px"><div class="tsb"><svg class="a" style="left:4px;top:7px" width="8" height="5" viewBox="0 0 8 5"><path d="M0.500 4.500L4 1L7.500 4.500" fill="none" stroke="#b2b2b2" stroke-width="1.700"/></svg><svg class="a" style="left:4px;bottom:7px" width="8" height="5" viewBox="0 0 8 5"><path d="M0.500 0.500L4 4L7.500 0.500" fill="none" stroke="#b2b2b2" stroke-width="1.700"/></svg></div></div>
<!-- Suivi group -->
<div class="gb" style="left:56px;top:897px;width:525px;height:62px"></div>
<div class="gbl" style="left:103px;top:888px">Suivi</div>
<div class="lbl" style="left:49px;width:80px;top:907px">Statut</div>
<div class="fld" style="left:136px;top:907px;width:160px;letter-spacing:0.600px">A-TRAITER</div>
<div class="lbl" style="left:49px;width:80px;top:926px">Util. affecté</div>
<div class="fld" style="left:136px;top:926px;width:240px">Non assigné</div>
<!-- Description group -->
<div class="gb" style="left:592px;top:527px;width:977px;height:430px"></div>
<div class="gbl" style="left:609px;top:517px">Description</div>
<div class="lbl" style="left:589px;width:80px;top:530px">Famille</div>
<div class="fld" style="left:676px;top:531px;width:250px;line-height:15px">IS_Integration</div>
<div class="eq" style="left:934px;top:531px">=</div>
<div class="fld" style="left:948px;top:531px;width:600px;line-height:15px">Erreurs d'intégraton</div>
<div class="lbl" style="left:589px;width:80px;top:549px">Code erreur</div>
<div class="fld" style="left:676px;top:550px;width:250px;line-height:15px">IS_IN</div>
<div class="eq" style="left:934px;top:550px">=</div>
<div class="fld" style="left:948px;top:550px;width:600px;line-height:15px">IN en erreur</div>
<div class="lbl" style="left:589px;width:80px;top:568px">Libellé</div>
<div class="ta" style="left:676px;top:568px;width:875px;height:110px">Problème exécution requête GDL :Intégration impossible : il y a des erreurs de nomenclatures.<div class="tsb"><svg class="a" style="left:4px;top:7px" width="8" height="5" viewBox="0 0 8 5"><path d="M0.500 4.500L4 1L7.500 4.500" fill="none" stroke="#b2b2b2" stroke-width="1.700"/></svg><svg class="a" style="left:4px;bottom:7px" width="8" height="5" viewBox="0 0 8 5"><path d="M0.500 0.500L4 4L7.500 0.500" fill="none" stroke="#b2b2b2" stroke-width="1.700"/></svg></div></div>
<div class="lbl" style="left:589px;width:80px;top:680px">Conséquence</div>
<div class="ta" style="left:676px;top:680px;width:875px;height:110px">Evénément en erreur =&gt; cette ligne de commande ne pourra pas avancer dans le flux (lancement, expédition,... bloqué)<div class="tsb"><svg class="a" style="left:4px;top:7px" width="8" height="5" viewBox="0 0 8 5"><path d="M0.500 4.500L4 1L7.500 4.500" fill="none" stroke="#b2b2b2" stroke-width="1.700"/></svg><svg class="a" style="left:4px;bottom:7px" width="8" height="5" viewBox="0 0 8 5"><path d="M0.500 0.500L4 4L7.500 0.500" fill="none" stroke="#b2b2b2" stroke-width="1.700"/></svg></div></div>
<div class="lbl" style="left:589px;width:80px;top:792px">Piste analyse</div>
<div class="ta" style="left:676px;top:792px;width:875px;height:110px"><div class="tsb"><svg class="a" style="left:4px;top:7px" width="8" height="5" viewBox="0 0 8 5"><path d="M0.500 4.500L4 1L7.500 4.500" fill="none" stroke="#b2b2b2" stroke-width="1.700"/></svg><svg class="a" style="left:4px;bottom:7px" width="8" height="5" viewBox="0 0 8 5"><path d="M0.500 0.500L4 4L7.500 0.500" fill="none" stroke="#b2b2b2" stroke-width="1.700"/></svg></div></div>
<div class="lbl" style="left:589px;width:80px;top:919px">Trace dispo?</div>
<div class="a" style="left:676px;top:921px;width:11px;height:12px;background:#ececec;border:1px solid #c8c8c8"></div>
<svg class="a" style="left:678px;top:923px" width="8" height="8" viewBox="0 0 8 8"><path d="M1 4L3 6.300L7 1" fill="none" stroke="#bdbdbd" stroke-width="1.200"/></svg>
<div class="a nw" style="left:709px;top:910px;width:78px;height:38px;background:#e1e1e1;border:1px solid #adadad;text-align:center;line-height:37px;font-size:10.700px">Voir la trace</div>
<!-- bottom bar -->
<div class="a" style="left:43px;top:983px;width:1876px;height:33px;background:#fff"></div>
<div class="a" style="left:46px;top:987px;width:150px;height:24px;background:#f0f0f0"></div>
<div class="btn" style="left:49px;top:989px;width:70px;background:#cccccc;border-color:#bfbfbf"></div>
<svg class="a" style="left:61px;top:994px" width="11" height="9" viewBox="0 0 11 9"><path d="M1 4.500L4 7.500L10 1" fill="none" stroke="#b0b0b0" stroke-width="2"/></svg>
<div class="a nw" style="left:77px;top:990px;font-size:10.800px;line-height:19px;color:#8a8a8a">Valider</div>
<div class="btn" style="left:123px;top:989px;width:70px"></div>
<svg class="a" style="left:132px;top:993px" width="12" height="12" viewBox="0 0 12 12"><path d="M1.500 1.500L10.500 10.500M10.500 1.500L1.500 9.500" stroke="#f04e23" stroke-width="2.600" stroke-linecap="round"/></svg>
<div class="a nw" style="left:149px;top:990px;font-size:10.800px;line-height:19px">Annuler</div>
<div class="a" style="left:0;top:1013px;width:1919px;height:3px;background:#f4f9fb"></div>
<div class="a" style="left:0;top:1013px;width:1919px;height:1px;background:#dfeaf2"></div>
<div class="a" style="left:0;top:1012px;width:41px;height:4px;background:#1896a2"></div>
<!-- ===== annotation overlays ===== -->
<div class="a" style="left:0.500px;top:53px;width:970px;height:97px;background:rgba(0,140,0,0.2);border-radius:12px 10px 10px 12px"></div>
<div class="a" style="left:43px;top:170.500px;width:1537.500px;height:278px;background:rgba(30,160,225,0.2);border-radius:42px"></div>
<div class="a" style="left:43px;top:481px;width:1527px;height:489px;background:rgba(106,0,255,0.2);border-radius:68px"></div>
<!-- circle 3 -->
<div class="a" style="left:991px;top:52.500px;width:69px;height:69px;border-radius:50%;background:#008c00;box-shadow:1px 3px 5px rgba(0,0,0,0.35);color:#fff;font-weight:bold;font-size:43px;line-height:66px;padding-top:3.500px;text-align:center">3</div>
<div class="a nw" style="left:964px;top:125.500px;font-size:16px;line-height:20px;color:#008c00;-webkit-text-stroke:0.700px #008c00">Zone des actions</div>
<!-- circle 1 -->
<div class="a" style="left:1586.500px;top:290.300px;width:70px;height:70px;border-radius:50%;background:#1ca0e0;box-shadow:1px 3px 5px rgba(0,0,0,0.35);color:#fff;font-weight:bold;font-size:43px;line-height:68px;padding-top:2px;text-align:center">1</div>
<div class="a nw" style="left:1583.500px;top:365.700px;font-size:16px;line-height:20px;color:#48b2f6;-webkit-text-stroke:0.700px #48b2f6">Entête des erreurs</div>
<!-- circle 2 -->
<div class="a" style="left:1576.500px;top:685.500px;width:75px;height:75px;border-radius:50%;background:#6a00ff;box-shadow:1px 3px 5px rgba(0,0,0,0.35);color:#fff;font-weight:bold;font-size:43px;line-height:72px;padding-top:3px;text-align:center">2</div>
<div class="a nw" style="left:1573px;top:765.300px;font-size:16px;line-height:20px;color:#6a00ff;-webkit-text-stroke:0.700px #6a00ff">Détail des erreurs</div>
<!-- arrow -->
<svg class="a" style="left:760px;top:365px" width="70" height="290" viewBox="760 365 70 290"><path d="M795.500 373.500C816.700 459 816.700 544.500 790.800 629" fill="none" stroke="#4760fa" stroke-width="4.200" stroke-linecap="round"/><path d="M785.700 642.800L780.700 621.200L791.600 626.500L801.400 625.700Z" fill="#4760fa" stroke="#4760fa" stroke-width="1" stroke-linejoin="round"/></svg>
<!-- callout -->
<div class="a" style="left:817px;top:470.500px;width:743.500px;height:59px;border-radius:8px;background:#4760fa;box-shadow:0 3px 7px rgba(0,0,0,0.35);color:#fff;font-size:18px;line-height:21.500px;text-align:center;padding-top:9px;white-space:nowrap">Selon le famille de l'erreur sur laquelle on clique dans l'entête, on visualisera le/les détails<br>dans une présentation adaptée à ce type d'erreur !</div>
</body></html>
